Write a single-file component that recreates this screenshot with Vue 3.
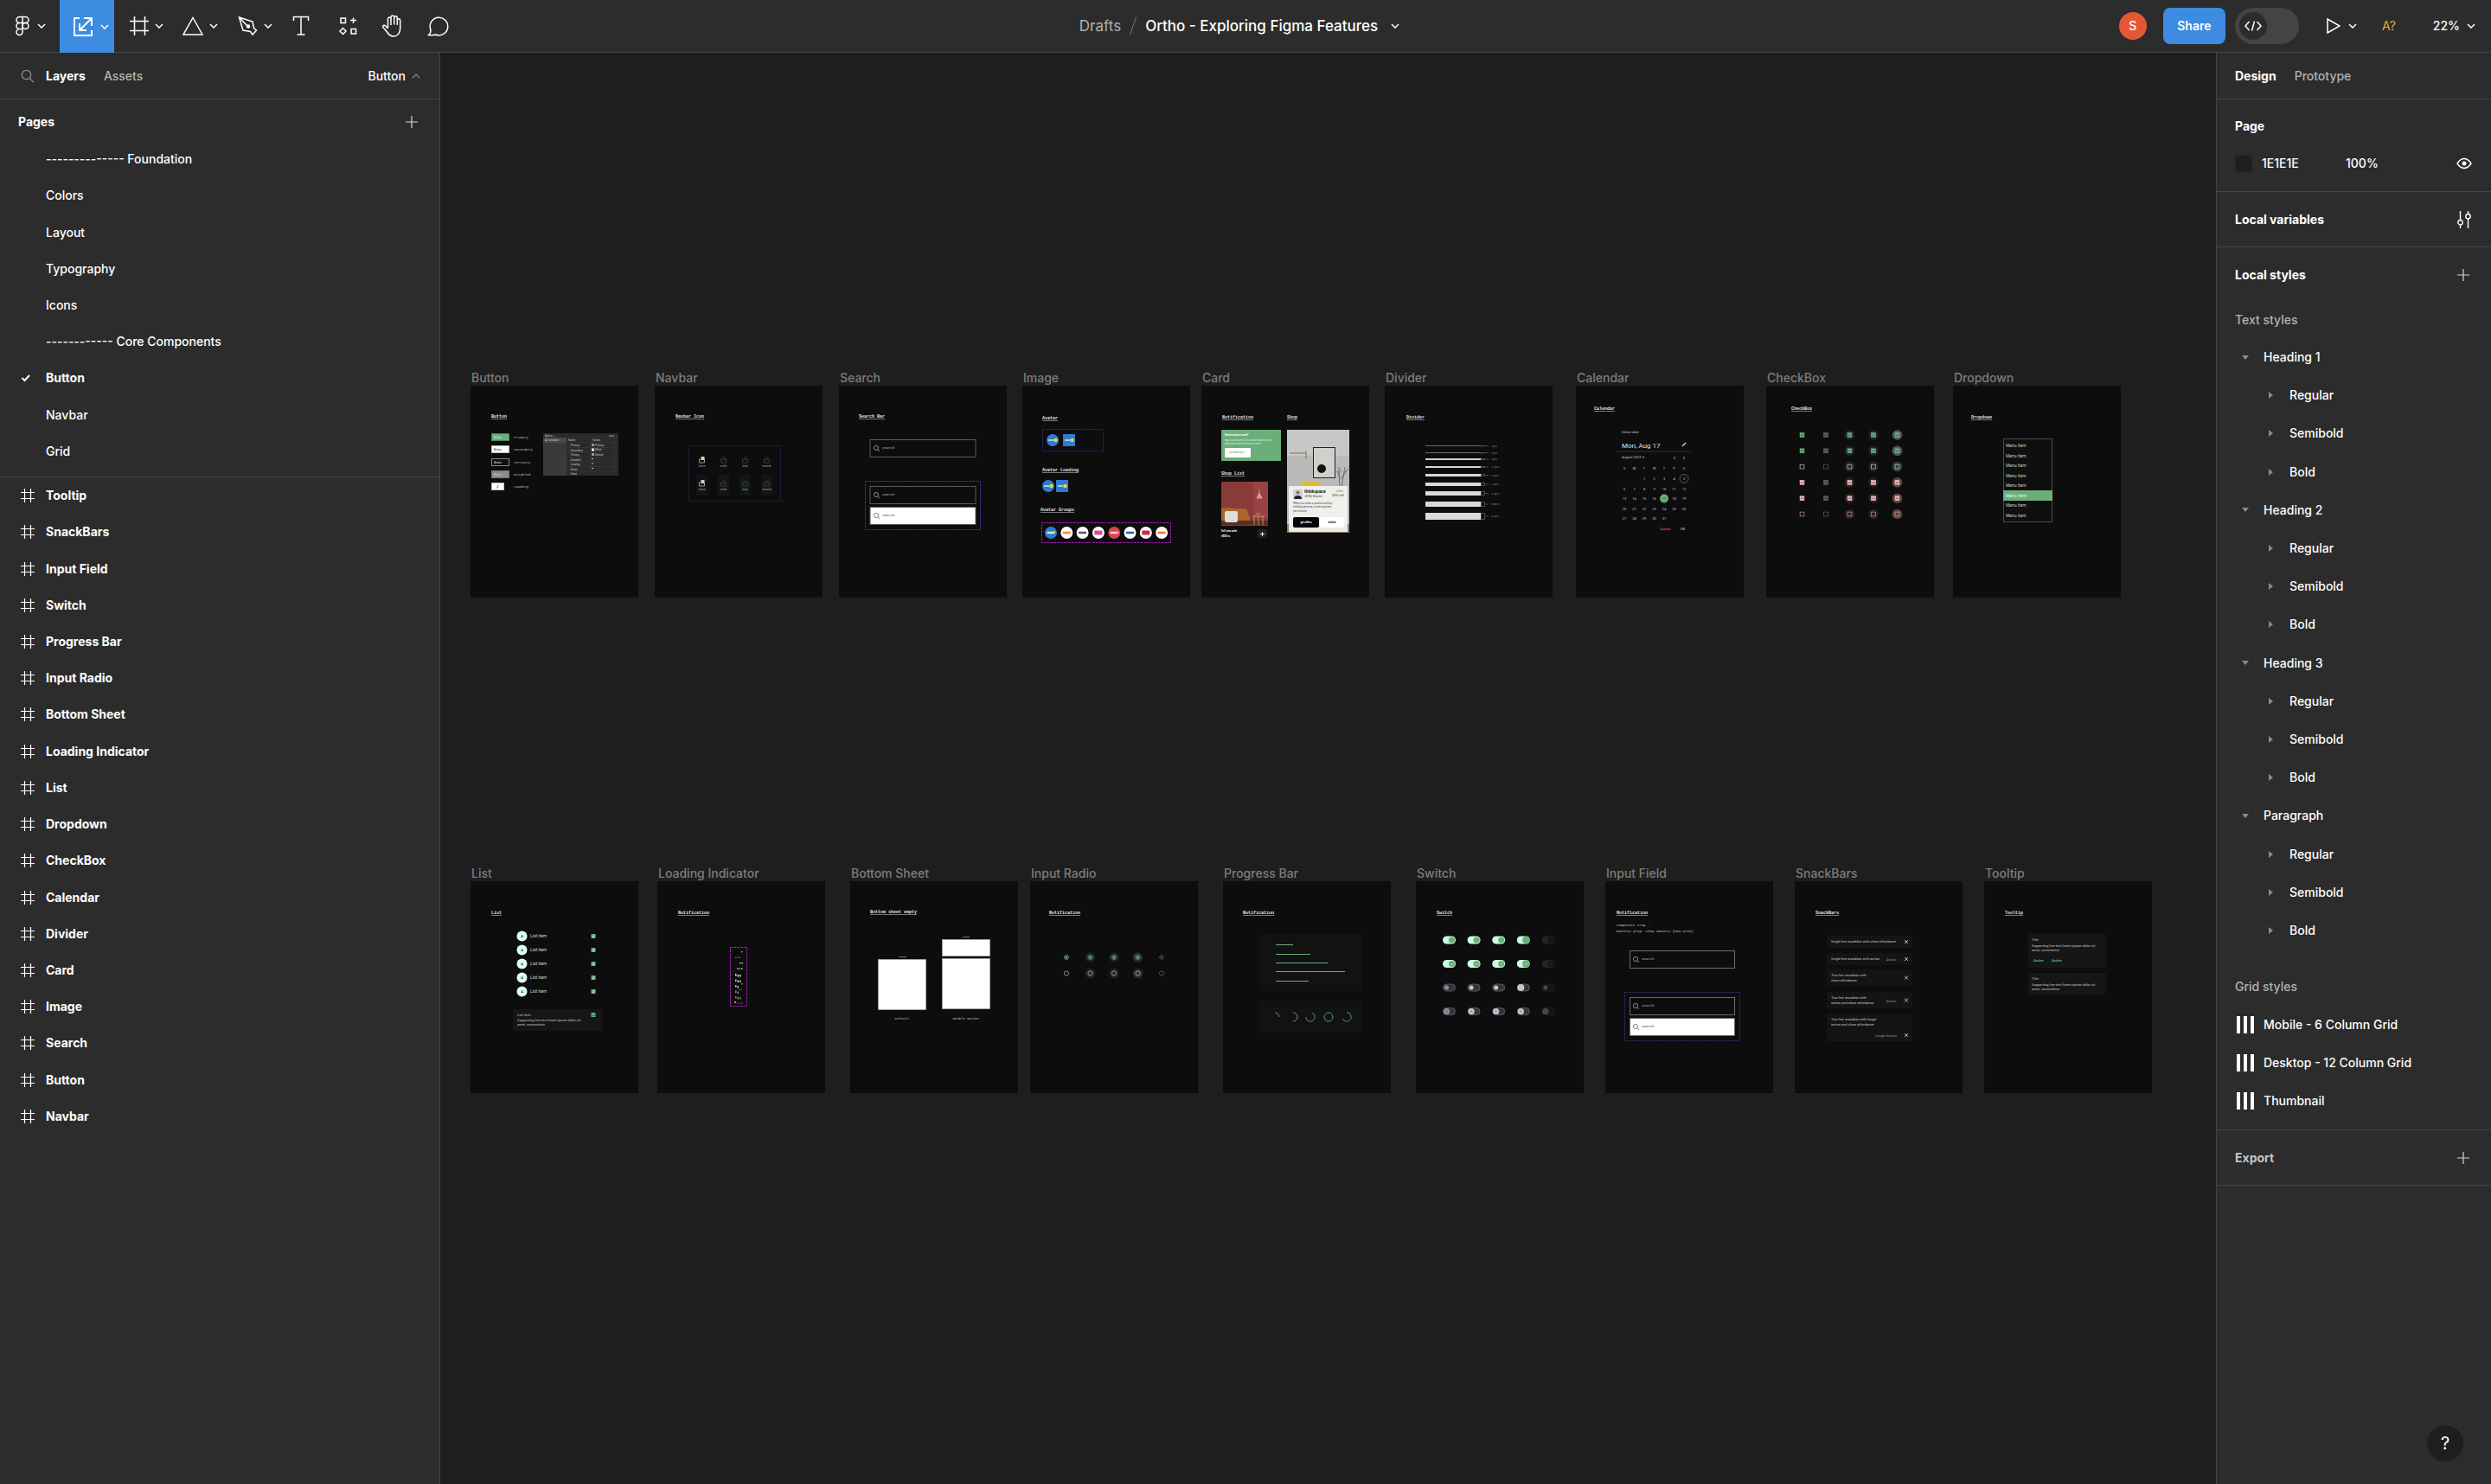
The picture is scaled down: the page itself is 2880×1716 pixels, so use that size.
<script setup>
import { ref } from 'vue'

const pages = [
  '-------------- Foundation', 'Colors', 'Layout', 'Typography', 'Icons',
  '------------ Core Components', 'Button', 'Navbar', 'Grid',
]
const currentPage = ref('Button')

const layers = [
  'Tooltip', 'SnackBars', 'Input Field', 'Switch', 'Progress Bar', 'Input Radio',
  'Bottom Sheet', 'Loading Indicator', 'List', 'Dropdown', 'CheckBox', 'Calendar',
  'Divider', 'Card', 'Image', 'Search', 'Button', 'Navbar',
]

const textStyles = ['Heading 1', 'Heading 2', 'Heading 3', 'Paragraph']
const weights = ['Regular', 'Semibold', 'Bold']
const gridStyles = ['Mobile - 6 Column Grid', 'Desktop - 12 Column Grid', 'Thumbnail']

const fill = ref('1E1E1E')
const opacity = ref('100%')
const devMode = ref(false)

// Frames on the canvas; x and y are canvas coordinates.
const frames = [
  { name: 'Button', x: 35, y: 385, tx: 24, ty: 37, title: 'Button' },
  { name: 'Navbar', x: 248, y: 385, tx: 24, ty: 37, title: 'Navbar Icon' },
  { name: 'Search', x: 461, y: 385, tx: 23, ty: 37, title: 'Search Bar' },
  { name: 'Image', x: 673, y: 385, tx: 23, ty: 39, title: 'Avatar' },
  { name: 'Card', x: 880, y: 385, tx: 24, ty: 38, title: 'Notification' },
  { name: 'Divider', x: 1092, y: 385, tx: 25, ty: 38, title: 'Divider' },
  { name: 'Calendar', x: 1313, y: 385, tx: 21, ty: 28, title: 'Calendar' },
  { name: 'CheckBox', x: 1533, y: 385, tx: 29, ty: 28, title: 'CheckBox' },
  { name: 'Dropdown', x: 1749, y: 385, tx: 21, ty: 38, title: 'Dropdown' },
  { name: 'List', x: 35, y: 958, tx: 24, ty: 38, title: 'List' },
  { name: 'Loading Indicator', x: 251, y: 958, tx: 24, ty: 38, title: 'Notification' },
  { name: 'Bottom Sheet', x: 474, y: 958, tx: 23, ty: 37, title: 'Bottom sheet empty' },
  { name: 'Input Radio', x: 682, y: 958, tx: 22, ty: 38, title: 'Notification' },
  { name: 'Progress Bar', x: 905, y: 958, tx: 23, ty: 38, title: 'Notification' },
  { name: 'Switch', x: 1128, y: 958, tx: 24, ty: 38, title: 'Switch' },
  { name: 'Input Field', x: 1347, y: 958, tx: 13, ty: 38, title: 'Notification' },
  { name: 'SnackBars', x: 1566, y: 958, tx: 24, ty: 38, title: 'SnackBars' },
  { name: 'Tooltip', x: 1785, y: 958, tx: 24, ty: 38, title: 'Tooltip' },
]

const buttonKinds = [
  { name: 'Primary', y: 55, w: 21, bg: '#6aae7a', stroke: '#4d8159', ink: '#d8f0de' },
  { name: 'Secondary', y: 69, w: 21, bg: '#ffffff', stroke: '#bbbbbb', ink: '#222222' },
  { name: 'Tertiary', y: 84, w: 21, bg: '#0d0d0d', stroke: '#8a8a8a', ink: '#eeeeee' },
  { name: 'Disabled', y: 98, w: 21, bg: '#8c8c8c', stroke: '#777777', ink: '#cccccc' },
  { name: 'Loading', y: 112, w: 15, bg: '#ffffff', stroke: '#bbbbbb', ink: '' },
]
const variables = ['Primary', 'Secondary', 'Tertiary', 'Disabled', 'Loading', 'Hover', 'State']
const navItems = ['home', 'wallet', 'shop', 'rewards']
const brands = ['#2f7bd0', '#ffffff', '#ffffff', '#ffffff', '#d94452', '#ffffff', '#ffffff', '#ffffff']
const brandMarks = ['#cfe4f8', '#f08b2c', '#555b66', '#e0479b', '#f6c9ce', '#2362b0', '#d7263d', '#ef7d22']
const dividers = [
  { y: 69, h: 1, label: '2px', c: '#6a6a6a' }, { y: 77, h: 1, label: '4px', c: '#6a6a6a' },
  { y: 84, h: 2, label: '8px', c: '#cfcfcf' }, { y: 93, h: 2, label: '12px', c: '#d6d6d6' },
  { y: 102, h: 3, label: '16px', c: '#d9d9d9' }, { y: 112, h: 4, label: '20px', c: '#d9d9d9' },
  { y: 122, h: 5, label: '24px', c: '#d9d9d9' }, { y: 134, h: 6, label: '36px', c: '#d9d9d9' },
  { y: 147, h: 8, label: '48px', c: '#d9d9d9' },
]
const weekdays = ['S', 'M', 'T', 'W', 'T', 'F', 'S']
const days = Array.from({ length: 31 }, (_, i) => ({
  n: i + 1, col: (i + 2) % 7, row: 1 + Math.floor((i + 2) / 7),
}))
const checkRows = [
  { c: '#6aae7a', kind: 'tick', halo: '#22222a', press: '#56565e' },
  { c: '#6aae7a', kind: 'dash', halo: '#22222a', press: '#56565e' },
  { c: '#cac4d0', kind: 'box', halo: '#222224', press: '#2c4232' },
  { c: '#f2b8b5', kind: 'tick', halo: '#2a2020', press: '#5d4341' },
  { c: '#f2b8b5', kind: 'dash', halo: '#2a2020', press: '#5d4341' },
  { c: '#c99590', kind: 'box', halo: '#2a2020', press: '#5d4341' },
]
const progress = [{ y: 73, w: 20 }, { y: 84, w: 40 }, { y: 94, w: 60 }, { y: 104, w: 80 }, { y: 115, w: 38 }]
const loaderRows = [
  { x: 97, n: 1, c: '#bbbbbb' }, { x: 90, n: 3, c: '#666666' }, { x: 95, n: 2, c: '#dddddd' },
  { x: 92, n: 3, c: '#dddddd' }, { x: 90, n: 3, c: '#dddddd' }, { x: 90, n: 3, c: '#cccccc' },
  { x: 90, n: 2, c: '#bbbbbb' }, { x: 90, n: 2, c: '#8888aa' }, { x: 90, n: 3, c: '#888866' },
  { x: 90, n: 4, c: '#555577' },
]
const snacks = [
  { y: 63, h: 14, lines: ['Single-line snackbar with close affordance'], action: '' },
  { y: 83, h: 14, lines: ['Single-line snackbar with action'], action: 'Action' },
  { y: 102, h: 19, lines: ['Two-line snackbar with', 'close affordance'], action: '' },
  { y: 128, h: 19, lines: ['Two-line snackbar with', 'action and close affordance'], action: 'Action' },
]
</script>

<template>
  <div class="app">
    <header class="toolbar">
      <nav class="tools" aria-label="Tools">
        <button class="tool menu" aria-label="Main menu">
          <svg class="ico" viewBox="0 0 28 28"><path d="M14 3.5h-3.5a3.5 3.5 0 0 0 0 7h3.5zM14 3.5h3.5a3.5 3.5 0 0 1 0 7H14zM14 10.5h-3.5a3.5 3.5 0 0 0 0 7H14zM10.500 17.500a3.500 3.500 0 1 0 3.500 3.500v-3.500z" /><circle cx="17.5" cy="14" r="3.5" /></svg>
          <svg class="chev" viewBox="0 0 10 6"><path d="M1 1l4 4 4-4" /></svg>
        </button>
        <button class="tool active" aria-label="Move">
          <svg class="ico thick" viewBox="0 0 28 28"><path d="M9 4H3v20h20v-6M14 4h9v9M23 4L9 18M9 10v8h8" /></svg>
          <svg class="chev" viewBox="0 0 10 6"><path d="M1 1l4 4 4-4" /></svg>
        </button>
        <button class="tool" aria-label="Frame">
          <svg class="ico" viewBox="0 0 28 28"><path d="M9.500 3v22M21.500 3v22M4 8.500h22M4 19.500h22" /></svg>
          <svg class="chev" viewBox="0 0 10 6"><path d="M1 1l4 4 4-4" /></svg>
        </button>
        <button class="tool" aria-label="Shapes">
          <svg class="ico" viewBox="0 0 28 28"><path d="M14 4.500L25 24H3z" /></svg>
          <svg class="chev" viewBox="0 0 10 6"><path d="M1 1l4 4 4-4" /></svg>
        </button>
        <button class="tool" aria-label="Pen">
          <svg class="ico" viewBox="0 0 28 28"><path d="M4.500 4l4.500 15 8.500 1.500 2.500 3.500 4.500-5-3-2.500L20 9zM4.500 4L14 14" /><circle cx="15" cy="14.5" r="1.5" fill="#fff" /></svg>
          <svg class="chev" viewBox="0 0 10 6"><path d="M1 1l4 4 4-4" /></svg>
        </button>
        <button class="tool single" aria-label="Text">
          <svg class="ico" viewBox="0 0 28 28"><path d="M5.500 8V3.500h17V8M14 3.500V24M9.500 24h9" /></svg>
        </button>
        <button class="tool single" aria-label="Resources">
          <svg class="ico" viewBox="0 0 28 28"><path d="M7 5h5.500v5.500H7zM21.500 4.500v6.500M18 7.500h7M9.500 16.500l3.500 3.500-3.500 3.500L6 20zM19 17.500h5.500V23H19z" /></svg>
        </button>
        <button class="tool single" aria-label="Hand">
          <svg class="ico" viewBox="0 0 28 28"><path d="M8.500 16V5.500a1.800 1.800 0 0 1 3.500 0V13M12 12.500V3.500a1.900 1.900 0 0 1 3.700 0v9M15.700 12.500V4.500a1.800 1.800 0 0 1 3.600 0V13M19.300 13V7.500a1.700 1.700 0 0 1 3.400 0V17c0 5-3 9-7.700 9-4.500 0-6-2.500-7.500-5L2.800 15.500c-.8-2.500 2-3 3.300-1.300L8.500 17" /></svg>
        </button>
        <button class="tool single" aria-label="Comment">
          <svg class="ico" viewBox="0 0 28 28"><path d="M2.500 24.500c2-1.500 2.700-4 2.400-6.200A10.300 10.300 0 1 1 10.500 24c-2.500.8-5 .8-8 .5z" /></svg>
        </button>
      </nav>
      <div class="file">
        <a class="folder" href="#drafts">Drafts</a>
        <svg class="slash" viewBox="0 0 8 22"><path d="M0.500 21.500L7.500 0.500" /></svg>
        <button class="filename">Ortho - Exploring Figma Features
          <svg class="chev" viewBox="0 0 10 6"><path d="M1 1l4 4 4-4" /></svg>
        </button>
      </div>
      <div class="actions">
        <span class="avatar">S</span>
        <button class="share">Share</button>
        <label class="dev">
          <input v-model="devMode" type="checkbox" aria-label="Dev Mode">
          <svg viewBox="0 0 20 14"><path d="M5.500 2L1 7l4.500 5M14.500 2L19 7l-4.500 5M11.500 1.500l-3 11" /></svg>
        </label>
        <button class="play" aria-label="Present">
          <svg class="tri" viewBox="0 0 16 18"><path d="M1 1l14 8-14 8z" /></svg>
          <svg class="chev" viewBox="0 0 10 6"><path d="M1 1l4 4 4-4" /></svg>
        </button>
        <button class="missing" aria-label="Missing fonts">A?</button>
        <button class="zoom">22%
          <svg class="chev" viewBox="0 0 10 6"><path d="M1 1l4 4 4-4" /></svg>
        </button>
      </div>
    </header>

    <aside class="left">
      <div class="tabs">
        <svg class="search" viewBox="0 0 16 16"><circle cx="6.5" cy="6.5" r="5.2" /><path d="M10.200 10.500L15 15.200" /></svg>
        <button class="tab on">Layers</button>
        <button class="tab">Assets</button>
        <button class="pick">Button
          <svg class="chev up" viewBox="0 0 10 6"><path d="M1 5l4-4 4 4" /></svg>
        </button>
      </div>
      <section class="pages">
        <div class="head">
          <h2>Pages</h2>
          <button class="plus" aria-label="Add page"><svg viewBox="0 0 16 16"><path d="M8 1v14M1 8h14" /></svg></button>
        </div>
        <ul>
          <li v-for="p in pages" :key="p">
            <svg v-if="p === currentPage" class="check" viewBox="0 0 12 10"><path d="M1.500 5l3 3L10 2" /></svg>
            <button :class="['row', { current: p === currentPage }]" @click="currentPage = p">{{ p }}</button>
          </li>
        </ul>
      </section>
      <ul class="layers">
        <li v-for="l in layers" :key="l">
          <svg class="hash" viewBox="0 0 16 16"><path d="M4.500 0v16M11.500 0v16M0 4.500h16M0 11.500h16" /></svg>
          <button class="row">{{ l }}</button>
        </li>
      </ul>
    </aside>

    <main class="canvas">
      <figure v-for="f in frames" :key="f.name" class="node" :style="{ left: f.x + 'px', top: f.y + 'px' }">
        <figcaption>{{ f.name }}</figcaption>
        <svg class="art" viewBox="0 0 194 245">
          <text class="title" :x="f.tx" :y="f.ty">{{ f.title }}</text>

          <template v-if="f.name === 'Button'">
            <g v-for="b in buttonKinds" :key="b.name">
              <rect x="24.5" :y="b.y + 0.5" :width="b.w - 1" height="8" :fill="b.bg" :stroke="b.stroke" />
              <text v-if="b.ink" class="t3" x="27" :y="b.y + 6" :fill="b.ink">Button →</text>
              <path v-else :d="`M30 ${b.y + 6}q2 0 2-3`" stroke="#777" fill="none" />
              <text class="m4" x="50" :y="b.y + 6">{{ b.name }}</text>
            </g>
            <rect x="84" y="55" width="87" height="49" fill="#2a2a2a" />
            <rect x="84" y="60" width="27" height="44" fill="#3a3a3a" />
            <rect x="84" y="60" width="27" height="6" fill="#4a4a4a" />
            <path d="M84 60h87M111 55v49M138.500 60v44M166.500 60v44M111 66h60M111 71.500h60M111 77h60M111 82.500h60M111 88h60M111 93.500h60M111 99h60" stroke="#3c3c3c" fill="none" stroke-width=".5" />
            <text class="t3" x="86" y="59">Button ⌄</text>
            <text class="t3" x="86" y="64">All variables</text>
            <text class="t3" x="113" y="64">Name</text>
            <text class="t3" x="141" y="64">Values</text>
            <rect x="160" y="57" width="6" height="2" fill="#2f6ea8" />
            <text v-for="(v, i) in variables" :key="v" class="t3" x="114" :y="70 + i * 5.5">◦ {{ v }}</text>
            <rect x="140" y="67" width="3" height="3" fill="#6aae7a" />
            <rect x="140" y="72.5" width="3" height="3" fill="#fff" />
            <rect x="140" y="78" width="3" height="3" fill="#999" />
            <text class="t3" x="144" y="70">Primary</text>
            <text class="t3" x="144" y="75">White</text>
            <text class="t3" x="144" y="81">Default</text>
            <path d="M140 84.500h2M140 90h2M140 95.500h2" stroke="#ccc" />
          </template>

          <template v-else-if="f.name === 'Navbar'">
            <rect x="39.5" y="69.5" width="106" height="64" class="dash" stroke="#25204a" />
            <g v-for="r in 2" :key="r">
              <g v-for="(n, i) in navItems" :key="n" :transform="`translate(${54.5 + i * 25}, ${86 + (r - 1) * 27})`">
                <rect v-if="r === 2" x="-6.5" y="-10" width="13" height="24" rx="2" :fill="i === 0 ? '#141414' : '#121712'" />
                <path d="M-3-1h6v4h-6zM-1-3h3" :stroke="i === 0 ? '#9a9a9a' : '#3a3d3a'" fill="none" />
                <rect v-if="i === 0" x="-1" y="-4" width="4" height="4" fill="#ccc" />
                <text class="t3 mid" x="0" y="8" fill="#a0a0a0">{{ n }}</text>
              </g>
            </g>
          </template>

          <template v-else-if="f.name === 'Search'">
            <rect x="30.5" y="110.5" width="133" height="56" class="dash" stroke="#4a2a8c" />
            <g v-for="(y, i) in [62, 116, 140]" :key="y">
              <rect x="36" :y="y + 0.5" width="122" height="20" :fill="i === 2 ? '#fff' : '#0d0d0d'" stroke="#5a5a5a" />
              <circle cx="43" :cy="y + 10" r="2.6" fill="none" :stroke="i === 2 ? '#555' : '#bbb'" stroke-width=".7" />
              <path :d="`M45 ${y + 12}l2 2`" :stroke="i === 2 ? '#555' : '#bbb'" stroke-width=".7" />
              <text class="m4" x="50" :y="y + 11" :fill="i === 2 ? '#222' : '#ccc'">search</text>
            </g>
          </template>

          <template v-else-if="f.name === 'Image'">
            <text class="title" x="23" y="99">Avatar Loading</text>
            <text class="title" x="21" y="145">Avatar Groups</text>
            <rect x="23.5" y="50.5" width="70" height="25" class="dash" stroke="#2a2460" />
            <rect x="22.5" y="158.5" width="149" height="23" class="dash" stroke="#a020b0" />
            <circle cx="35" cy="63" r="7" fill="#2f7bd0" />
            <rect x="47" y="56" width="14" height="14" fill="#2f7bd0" />
            <circle cx="30" cy="116" r="7" fill="#2f7bd0" />
            <rect x="39" y="109" width="14" height="14" fill="#2f7bd0" />
            <g v-for="p in [[35, 63], [54, 63], [30, 116], [46, 116]]" :key="p.join()">
              <path :d="`M${p[0] - 5} ${p[1]}h6`" stroke="#cfe4f8" stroke-width="1.5" />
              <rect :x="p[0] + 1.5" :y="p[1] - 2" width="4" height="4" rx="1" fill="#d8e02c" />
            </g>
            <g v-for="(c, i) in brands" :key="i">
              <circle :cx="33 + i * 18.3" cy="170" r="7" :fill="c" />
              <path :d="`M${28.5 + i * 18.3} 170h9`" :stroke="brandMarks[i]" :stroke-width="i === 6 || i === 3 ? 5 : 2.5" />
            </g>
            <rect x="35" y="168" width="3" height="3" rx="1" fill="#d8e02c" />
          </template>

          <template v-else-if="f.name === 'Card'">
            <text class="title" x="99" y="38">Shop</text>
            <text class="title" x="23" y="103">Shop List</text>
            <rect x="23" y="51" width="69" height="36" fill="#6aae7a" />
            <text class="t3 bold" x="27" y="58" fill="#fff">Received your card?</text>
            <text class="t3" x="27" y="64" fill="#d9f2e0">tap to activate it if you have received your</text>
            <text class="t3" x="27" y="68" fill="#d9f2e0">physical card and want to use it</text>
            <rect x="27" y="72" width="30" height="11" fill="#fff" />
            <text class="t3" x="32" y="78" fill="#4b9a60">activate card</text>
            <rect x="23" y="111" width="54" height="51" fill="#8b3a3a" />
            <path d="M60 111h17v42H60z" fill="#a3484a" opacity=".6" />
            <path d="M67 120v4M67 124l-3 6h6z" fill="#caa08a" stroke="#d9b8a4" stroke-width=".7" />
            <path d="M23 142q8-2 14 0h14q3 2 3 7l2 2v8H23z" fill="#a9662a" />
            <path d="M23 156h54v5H23z" fill="#5b2f1c" />
            <path d="M59 151h14M61 151v10M66 151v10M71 151v10M63 148h5" stroke="#d9a08a" fill="none" stroke-width=".8" />
            <rect x="27" y="145" width="15" height="13" rx="2" fill="#ddd" />
            <text class="t3 bold" x="23" y="169" fill="#fff">Full size sofa</text>
            <text class="t3 bold" x="23" y="175" fill="#fff">₹800 rs</text>
            <rect x="65" y="166" width="11" height="10" rx="2" fill="#1c1f2e" />
            <path d="M70.500 169v5M68 171.500h5" stroke="#fff" />
            <rect x="99" y="51" width="72" height="119" fill="#b9bbbb" />
            <rect x="99" y="51" width="72" height="30" fill="#c6c8c8" />
            <path d="M102 78h19M121 75v10" stroke="#a48f5f" stroke-width="1.5" fill="none" />
            <rect x="129.5" y="71.5" width="25" height="35" fill="#cfcfcb" stroke="#222" />
            <circle cx="139" cy="96" r="5" fill="#111" />
            <path d="M115 111h22l3 6h-22z" fill="#e0b93f" />
            <path d="M160 118l-1-20M162 118l4-24M161 108l7-10M160 106l-3-8M158 94l3 5M166 100l4-4" stroke="#5a5f5a" stroke-width=".8" fill="none" />
            <path d="M99 160h72v10H99z" fill="#8a7a63" />
            <rect x="101" y="116" width="68" height="53" fill="#f3f2ee" opacity=".94" />
            <rect x="106" y="120" width="11" height="11" fill="#cfd3d6" />
            <circle cx="111.5" cy="123.5" r="2" fill="#8a6a58" />
            <path d="M107 131q0-4 4.500-4t4.500 4z" fill="#1c2230" />
            <text class="t5 bold" x="119" y="124" fill="#111">thinkspace</text>
            <text class="t3" x="119" y="129" fill="#444">JM Rd, Mumbai</text>
            <text class="t3" x="156" y="123" fill="#777">offers</text>
            <text class="t4 bold" x="151" y="128" fill="#3f9a58">20% off</text>
            <text class="t3" x="106" y="137" fill="#444">When you order a product and buy</text>
            <text class="t3" x="106" y="141" fill="#444">clothing services, more surprises</text>
            <text class="t3" x="106" y="146" fill="#444">yet to come</text>
            <rect x="106" y="152" width="30" height="12" rx="2" fill="#050505" />
            <text class="t3 bold mid" x="121" y="159" fill="#fff">get offers</text>
            <rect x="137" y="152" width="28" height="12" rx="2" fill="#fff" />
            <text class="t3 bold mid" x="151" y="159" fill="#111">details</text>
          </template>

          <template v-else-if="f.name === 'Divider'">
            <g v-for="d in dividers" :key="d.label">
              <rect x="47" :y="d.y" width="64" :height="d.h" :fill="d.c" />
              <rect x="111.5" :y="d.y + 0.5" width="4" :height="Math.max(d.h - 1, 0.5)" fill="none" stroke="#4a4a4a" />
              <path :d="`M116 ${d.y + d.h / 2}h4`" stroke="#4a4a4a" />
              <text class="m4" x="123" :y="d.y + d.h / 2 + 1" fill="#777">{{ d.label }}</text>
            </g>
          </template>

          <template v-else-if="f.name === 'Calendar'">
            <text class="t4" x="53" y="55">Select date</text>
            <text class="t8" x="53" y="72">Mon, Aug 17</text>
            <path d="M123 70l4-4" stroke="#ccc" stroke-width="1.5" />
            <path d="M47 76h86" stroke="#333" />
            <text class="t4" x="53" y="84">August 2023 ▾</text>
            <path d="M115 82l-2 1.500 2 1.500M124 82l2 1.500-2 1.500" stroke="#bbb" fill="none" stroke-width=".7" />
            <text v-for="(d, i) in weekdays" :key="'w' + i" class="t4 mid" :x="56 + i * 11.5" y="97">{{ d }}</text>
            <circle cx="125" cy="107.5" r="5" fill="none" stroke="#4d8a5c" stroke-width=".8" />
            <circle cx="102" cy="130.5" r="5" fill="#6aae7a" />
            <text v-for="d in days" :key="d.n" class="t4 mid" :x="56 + d.col * 11.5" :y="97.5 + d.row * 11.5" :fill="d.n === 17 ? '#234' : '#c4c4c4'">{{ d.n }}</text>
            <text class="t4 bold" x="97" y="167" fill="#d03a5c">Cancel</text>
            <text class="t4 bold" x="121" y="167" fill="#6aae7a">OK</text>
          </template>

          <template v-else-if="f.name === 'CheckBox'">
            <g v-for="(r, j) in checkRows" :key="j">
              <g v-for="i in 5" :key="i" :transform="`translate(${41.5 + (i - 1) * 27.5}, ${57 + j * 18.3})`" :opacity="i === 2 ? 0.45 : 1">
                <circle v-if="i > 2" r="5.8" :fill="i === 5 ? r.press : r.halo" />
                <rect x="-2.4" y="-2.4" width="4.8" height="4.8" :fill="r.kind === 'box' ? 'none' : i === 2 ? '#cac4d0' : r.c" :stroke="i === 2 ? '#cac4d0' : r.c" stroke-width=".7" />
                <path v-if="r.kind === 'tick'" d="M-1.600 0l1.200 1.200 2-2.400" stroke="#163a20" stroke-width=".7" fill="none" />
                <path v-if="r.kind === 'dash'" d="M-1.600 0h3.200" stroke="#163a20" stroke-width=".7" />
              </g>
            </g>
          </template>

          <template v-else-if="f.name === 'Dropdown'">
            <rect x="58.5" y="61.5" width="56" height="96" fill="#0f0f0f" stroke="#4a4a4a" />
            <rect x="58" y="121" width="57" height="12" fill="#6aae7a" />
            <text v-for="i in 8" :key="i" class="t5" x="61" :y="59.5 + i * 11.5" :fill="i === 6 ? '#e4f4e8' : '#c8c8c8'">Menu item</text>
          </template>

          <template v-else-if="f.name === 'List'">
            <g v-for="i in 5" :key="i" :transform="`translate(0, ${(i - 1) * 16})`">
              <circle cx="59.5" cy="63.5" r="6" fill="#dffcf0" />
              <text class="t4 bold mid" x="59.5" y="65" fill="#234">A</text>
              <text class="t5" x="69" y="65" fill="#d8d8d8">List item</text>
              <rect x="139.5" y="61" width="5" height="5" fill="#6aae7a" />
              <path d="M140.700 63.500l1.300 1.300 2-2.500" stroke="#e8fff0" stroke-width=".7" fill="none" />
            </g>
            <rect x="49" y="148" width="103" height="25" fill="#161616" />
            <text class="t4" x="54" y="156">List item</text>
            <text class="t4" x="54" y="162">Supporting line text lorem ipsum dolor sit</text>
            <text class="t4" x="54" y="167">amet, consectetur</text>
            <rect x="139.5" y="152" width="5" height="5" fill="#4cc277" />
            <path d="M140.700 154.500l1.300 1.300 2-2.500" stroke="#123" stroke-width=".7" fill="none" />
          </template>

          <template v-else-if="f.name === 'Loading Indicator'">
            <rect x="84.5" y="76.5" width="19" height="68" class="dash" stroke="#a020b0" />
            <g v-for="(r, j) in loaderRows" :key="j">
              <rect v-for="i in r.n" :key="i" :x="r.x + (i - 1) * 2.5" :y="81 + j * 6.5 + (j > 3 && i > 1 ? 1 : 0)" width="1.5" :height="j > 3 && j < 9 ? 2.5 : 1.3" :fill="r.c" />
            </g>
            <rect x="97" y="118" width="2" height="1.5" fill="#b84a4a" />
            <rect x="94" y="125" width="4" height="1" fill="#4a45c8" />
            <rect x="89" y="139" width="2" height="1.5" fill="#e6c832" />
          </template>

          <template v-else-if="f.name === 'Bottom Sheet'">
            <rect x="32.5" y="90.5" width="55" height="58" fill="#fff" stroke="#bbb" stroke-width=".6" />
            <rect x="106.5" y="67.5" width="55" height="19" fill="#fff" stroke="#bbb" stroke-width=".6" />
            <rect x="106.5" y="89.5" width="55" height="58" fill="#fff" stroke="#bbb" stroke-width=".6" />
            <path d="M56 87.500h9M130 64.500h8" stroke="#777" />
            <text class="m4 mid" x="60" y="160">Default</text>
            <text class="m4 mid" x="134" y="160">Double Decker</text>
          </template>

          <template v-else-if="f.name === 'Input Radio'">
            <g v-for="i in 5" :key="i" :transform="`translate(${42 + (i - 1) * 27.5}, 88)`">
              <g v-for="r in 2" :key="r" :transform="`translate(0, ${(r - 1) * 18.5})`" :opacity="i === 5 ? 0.45 : 1">
                <circle v-if="i > 1 && i < 5" r="5.7" :fill="i === 4 ? '#2c2c2c' : '#222224'" />
                <circle r="2.6" fill="none" :stroke="r === 1 ? '#6aae7a' : '#c2c6ca'" stroke-width=".7" />
                <circle v-if="r === 1" r="1.5" fill="#6aae7a" />
              </g>
            </g>
          </template>

          <template v-else-if="f.name === 'Progress Bar'">
            <rect x="42" y="61" width="119" height="66" rx="4" fill="#121212" />
            <rect x="42" y="138" width="119" height="37" rx="4" fill="#121212" />
            <rect v-for="p in progress" :key="p.y" x="61" :y="p.y" :width="p.w" height="1" fill="#6aae7a" />
            <g fill="none" stroke="#5c9a6b">
              <path d="M60 152a5 5 0 0 1 5 5M81 152a5 5 0 0 1 0 10M103 152.400a5 5 0 1 1-7 4.600M143 152a5 5 0 1 1-4.500 7" />
              <circle cx="122" cy="157" r="5" />
            </g>
          </template>

          <template v-else-if="f.name === 'Switch'">
            <g v-for="i in 5" :key="i" :transform="`translate(${38.5 + (i - 1) * 28.6}, 68)`">
              <g v-for="r in 4" :key="r" :transform="`translate(0, ${(r - 1) * 27.5})`">
                <template v-if="r < 3">
                  <rect x="-7.5" y="-4.5" width="15" height="9" rx="4.5" :fill="i === 5 ? '#242424' : '#cffae4'" />
                  <circle cx="3" :r="i === 4 ? 4.2 : 3.6" :fill="i === 5 ? '#14141a' : '#6aae7a'" />
                  <path v-if="r === 2" d="M1.500 0l1.200 1.200 2-2.400" :stroke="i === 5 ? '#3a3a40' : '#d6f5df'" stroke-width=".6" fill="none" />
                </template>
                <template v-else>
                  <rect x="-7" y="-4" width="14" height="8" rx="4" :fill="i === 5 ? '#141414' : '#36343b'" :stroke="i === 5 ? '#242424' : '#66626e'" stroke-width=".8" />
                  <circle cx="-3" :r="r === 4 ? 3.6 : i === 4 ? 4 : 2.5" :fill="i === 5 ? '#4a4a4c' : i === 1 ? '#938f99' : '#cac4d0'" />
                  <path v-if="r === 4" d="M-3.800-.8l1.600 1.600M-2.200-.8l-1.600 1.600" stroke="#36343b" stroke-width=".6" />
                </template>
              </g>
            </g>
          </template>

          <template v-else-if="f.name === 'Input Field'">
            <text class="m4" x="13" y="52">Component Prop -</text>
            <text class="m4" x="13" y="59">Boolean prop: Show amounts [WIN 9780]</text>
            <rect x="22.5" y="128.5" width="133" height="56" class="dash" stroke="#3a2468" />
            <g v-for="(y, i) in [80, 134, 158]" :key="y">
              <rect x="28.5" :y="y + 0.5" width="121" height="20" :fill="i === 2 ? '#fff' : '#0d0d0d'" stroke="#6a6a6a" />
              <circle cx="35" :cy="y + 10" r="2.6" fill="none" :stroke="i === 2 ? '#555' : '#bbb'" stroke-width=".7" />
              <path :d="`M37 ${y + 12}l2 2`" :stroke="i === 2 ? '#555' : '#bbb'" stroke-width=".7" />
              <text class="m4" x="42" :y="y + 11" :fill="i === 2 ? '#222' : '#ccc'">search</text>
            </g>
          </template>

          <template v-else-if="f.name === 'SnackBars'">
            <g v-for="s in snacks" :key="s.y">
              <rect x="37" :y="s.y" width="99" :height="s.h" rx="1" fill="#141414" />
              <text v-for="(t, k) in s.lines" :key="t" class="t4" x="42" :y="s.y + 8 + k * 6">{{ t }}</text>
              <text v-if="s.action" class="t4" x="106" :y="s.y + s.h / 2 + 2" fill="#6aae7a">Action</text>
              <path :d="`M127 ${s.y + s.h / 2 - 2}l4 4M131 ${s.y + s.h / 2 - 2}l-4 4`" stroke="#ddd" stroke-width=".8" />
            </g>
            <rect x="37" y="153" width="99" height="32" rx="1" fill="#141414" />
            <text class="t4" x="42" y="161">Two-line snackbar with longer</text>
            <text class="t4" x="42" y="167">action and close affordance</text>
            <text class="t4" x="93" y="180" fill="#6aae7a">Longer Action</text>
            <path d="M127 176l4 4M131 176l-4 4" stroke="#ddd" stroke-width=".8" />
          </template>

          <template v-else>
            <rect x="51" y="61" width="90" height="39" rx="3" fill="#161616" />
            <rect x="51" y="106" width="90" height="25" rx="3" fill="#161616" />
            <g v-for="y in [68, 113]" :key="y">
              <text class="t4" x="55" :y="y + 1">Title</text>
              <text class="t4" x="55" :y="y + 8">Supporting line text lorem ipsum dolor sit</text>
              <text class="t4" x="55" :y="y + 13">amet, consectetur</text>
            </g>
            <text class="t4 bold" x="57" y="93" fill="#6aae7a">Action</text>
            <text class="t4 bold" x="78" y="93" fill="#6aae7a">Action</text>
          </template>
        </svg>
      </figure>
    </main>

    <aside class="right">
      <div class="tabs">
        <button class="tab on">Design</button>
        <button class="tab">Prototype</button>
      </div>
      <section class="page-props">
        <h2>Page</h2>
        <div class="fill">
          <span class="swatch"></span>
          <input v-model="fill" class="hex" type="text" aria-label="Background colour">
          <input v-model="opacity" class="pct" type="text" aria-label="Opacity">
          <button class="end" aria-label="Toggle visibility">
            <svg viewBox="0 0 18 16"><path d="M1 8q3.500-5.500 8-5.500T17 8q-3.500 5.500-8 5.500T1 8z" /><circle class="pupil" cx="9" cy="8" r="2.5" /></svg>
          </button>
        </div>
      </section>
      <section class="bar">
        <h2>Local variables</h2>
        <button class="end" aria-label="Open variables">
          <svg class="tall" viewBox="0 0 18 20"><path d="M4.500 0v10.500M4.500 16v4M13.500 0v3.500M13.500 9v11" /><circle cx="4.5" cy="13.2" r="2.7" /><circle cx="13.5" cy="6.2" r="2.7" /></svg>
        </button>
      </section>
      <section class="styles">
        <div class="bar">
          <h2>Local styles</h2>
          <button class="plus" aria-label="Add style"><svg viewBox="0 0 16 16"><path d="M8 1v14M1 8h14" /></svg></button>
        </div>
        <h3>Text styles</h3>
        <div class="tree">
          <template v-for="s in textStyles" :key="s">
            <button class="branch"><span class="arrow down"></span>{{ s }}</button>
            <button v-for="w in weights" :key="s + w" class="branch leaf"><span class="arrow"></span>{{ w }}</button>
          </template>
        </div>
        <h3 class="grid-title">Grid styles</h3>
        <button v-for="g in gridStyles" :key="g" class="grid-row">
          <svg viewBox="0 0 20 20"><path d="M0 0h4v20H0zM8 0h4v20H8zM16 0h4v20h-4z" /></svg>{{ g }}
        </button>
      </section>
      <section class="bar export">
        <h2>Export</h2>
        <button class="plus" aria-label="Add export"><svg viewBox="0 0 16 16"><path d="M8 1v14M1 8h14" /></svg></button>
      </section>
      <button class="help" aria-label="Help">?</button>
    </aside>
  </div>
</template>

<style>
html, body { margin: 0; background: #1e1e1e; }
</style>

<style scoped>
.app {
  display: grid;
  grid-template-columns: 509px minmax(0, 1fr) 318px;
  grid-template-rows: 61px 1fr;
  min-height: 100vh;
  color: #fff;
  background: #1e1e1e;
  font: 500 14px/20px Inter, "Liberation Sans", sans-serif;
}
button, input { margin: 0; padding: 0; border: 0; background: none; color: inherit; font: inherit; text-align: left; }
h2, h3 { margin: 0; font-size: 14px; line-height: 20px; font-weight: 700; }
ul { list-style: none; margin: 0; padding: 0; }
svg { display: block; flex: none; fill: none; stroke: #fff; }

.toolbar {
  grid-column: 1 / -1;
  display: grid;
  grid-template-columns: 1fr auto 1fr;
  align-items: center;
  background: #2c2c2c;
  border-bottom: 1px solid #444;
}
.tools { display: flex; align-self: stretch; }
.tool { display: flex; align-items: center; gap: 5px; width: 63px; padding-left: 14px; box-sizing: border-box; }
.tool.menu { width: 69px; padding-left: 12px; gap: 3px; }
.tool.active { background: #3d8ce2; margin-bottom: -1px; }
.tool.single { width: 53px; padding: 0; justify-content: center; }
.ico { width: 28px; height: 28px; stroke-width: 1.5; }
.thick { stroke-width: 2; }
.chev { width: 10px; height: 6px; stroke-width: 1.5; }
.file { display: flex; align-items: center; padding-right: 14px; font-size: 17px; }
.folder { color: #b3b3b3; text-decoration: none; font-weight: 400; }
.slash { width: 8px; height: 22px; margin: 0 10px; stroke: #777; }
.filename { display: flex; align-items: center; gap: 15px; }
.actions { display: flex; align-items: center; justify-content: flex-end; padding-right: 18px; }
.avatar { width: 32px; height: 32px; border-radius: 50%; background: #e45735; line-height: 32px; text-align: center; }
.share { width: 72px; height: 42px; margin-left: 19px; border-radius: 8px; background: #3d8ce2; text-align: center; font-weight: 600; }
.dev { position: relative; width: 74px; height: 42px; margin-left: 11px; border-radius: 21px; background: #444; }
.dev input { appearance: none; display: block; width: 32px; height: 32px; margin: 5px; border-radius: 50%; background: #2c2c2c; }
.dev svg { position: absolute; left: 11px; top: 14px; width: 20px; height: 14px; stroke-width: 1.5; pointer-events: none; }
.play { display: flex; align-items: center; gap: 9px; margin-left: 32px; }
.tri { width: 16px; height: 18px; stroke-width: 1.5; }
.missing { margin-left: 29px; color: #e0b13a; font-weight: 400; }
.zoom { display: flex; align-items: center; gap: 8px; margin-left: 43px; }

.left, .right { background: #2c2c2c; }
.left { border-right: 1px solid #444; }
.right { border-left: 1px solid #444; display: flex; flex-direction: column; }
.tabs { display: flex; align-items: center; height: 53px; border-bottom: 1px solid #444; }
.tab { color: #b3b3b3; font-weight: 500; margin-left: 21px; }
.tab.on { color: #fff; font-weight: 700; }
.left .tabs { padding: 0 22px 0 24px; }
.left .tab.on { margin-left: 13px; }
.search { width: 16px; height: 16px; stroke: #8a8a8a; stroke-width: 1.3; }
.pick { display: flex; align-items: center; gap: 7px; margin-left: auto; }
.chev.up { stroke: #8a8a8a; stroke-width: 1.2; }
.head { display: flex; align-items: center; justify-content: space-between; padding: 16px 24px 12px 21px; }
.plus svg { width: 16px; height: 16px; stroke: #d5d5d5; stroke-width: 1.2; }
.pages { padding-bottom: 8px; border-bottom: 1px solid #444; }
.pages ul { display: flex; flex-direction: column; height: 380px; }
.pages li, .layers li { flex: 1; display: flex; align-items: center; padding-left: 24px; gap: 13px; }
.pages li { gap: 17px; }
.row { flex: 1; }
.pages .row:first-child { margin-left: 29px; }
.row.current, .layers .row { font-weight: 700; }
.check { width: 12px; height: 10px; stroke-width: 2; }
.layers { display: flex; flex-direction: column; height: 760px; }
.hash { width: 16px; height: 16px; stroke-width: 1.2; }

.canvas { position: relative; overflow: hidden; }
.node { position: absolute; margin: 0; width: 194px; }
.node figcaption { position: absolute; left: 1px; bottom: 100%; color: #7d7d7d; font-size: 14px; line-height: 18px; white-space: nowrap; font-weight: 500; }
.art { width: 194px; height: 245px; background: #0d0d0d; stroke: none; }
.art text:not([fill]) { fill: currentColor; }
.title { font: 700 5px "Liberation Mono", monospace; color: #e6e6e6; text-decoration: underline; }
.m4 { font: 400 4px "Liberation Mono", monospace; color: #c4c4c4; }
.t3 { font: 400 3px Roboto, sans-serif; color: #c8c8c8; }
.t4 { font: 400 4px Roboto, sans-serif; color: #c8c8c8; }
.t5 { font: 400 5px Roboto, sans-serif; }
.t8 { font: 400 8px Roboto, sans-serif; color: #e0e0e0; }
.bold { font-weight: 700; }
.mid { text-anchor: middle; }
.dash { fill: none; stroke-dasharray: 3 1; }

.right section { border-bottom: 1px solid #444; }
.page-props { padding: 21px 22px 22px 21px; }
.fill { display: flex; align-items: center; margin-top: 23px; height: 20px; }
.swatch { width: 20px; height: 20px; margin-right: 11px; background: #1e1e1e; border: 1px solid #262626; box-sizing: border-box; }
.hex { width: 97px; }
.pct { width: 60px; }
.end { margin-left: auto; }
.end svg { width: 18px; height: 16px; stroke-width: 1.4; }
.end .tall { height: 20px; }
.pupil { fill: #fff; stroke: none; }
.bar { display: flex; align-items: center; justify-content: space-between; height: 63px; padding: 0 22px 0 21px; }
.right .plus { margin-right: 2px; }
.styles { padding-bottom: 11px; }
h3 { padding-left: 21px; color: #b3b3b3; font-weight: 500; }
.styles h3 { margin-top: 11px; }
.tree { display: flex; flex-direction: column; height: 707px; margin-top: 11px; }
.branch { flex: 1; display: flex; align-items: center; padding-left: 29px; gap: 17px; }
.branch.leaf { padding-left: 60px; gap: 19px; }
.arrow { width: 0; height: 0; border: solid transparent; border-width: 4px 0 4px 5px; border-left-color: #8a8a8a; }
.arrow.down { border-width: 5px 4px 0; border-color: #8a8a8a transparent transparent; }
.styles .grid-title { margin: 33px 0 12px; }
.grid-row { display: flex; align-items: center; gap: 11px; width: 100%; height: 44px; padding-left: 23px; }
.grid-row svg { width: 20px; height: 20px; fill: #fff; stroke: none; }
.export { color: #c4c4c4; }
.help { align-self: flex-end; width: 42px; height: 42px; margin: auto 32px 26px 0; border-radius: 50%; background: #1e1e1e; text-align: center; font-size: 20px; font-weight: 400; }
</style>
